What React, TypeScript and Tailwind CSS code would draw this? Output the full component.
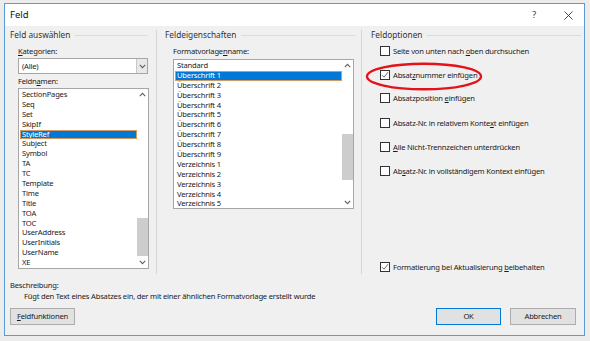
import React from 'react';

const font = { fontFamily: '"Noto Sans", "Open Sans", sans-serif' };

// access-key underline helper: text with one underlined letter at index
const Key: React.FC<{ text: string; at: number }> = ({ text, at }) => (
  <>
    {text.slice(0, at)}
    <span className="underline underline-offset-[1px]">{text.charAt(at)}</span>
    {text.slice(at + 1)}
  </>
);

const Up = () => (
  <svg width="7" height="5" viewBox="0 0 7 5">
    <path d="M0.8 4.2 L3.5 1.3 L6.2 4.2" fill="none" stroke="#606060" strokeWidth="1.1" />
  </svg>
);

const Down = () => (
  <svg width="7" height="5" viewBox="0 0 7 5">
    <path d="M0.8 0.8 L3.5 3.7 L6.2 0.8" fill="none" stroke="#606060" strokeWidth="1.1" />
  </svg>
);

const GroupHeader: React.FC<{ label: string; padLeft: string; lineRight: string }> = ({ label, padLeft, lineRight }) => (
  <div className={`flex items-center h-[10px] ${padLeft} ${lineRight}`}>
    <span className="text-[8.3px] leading-[10px] tracking-normal text-[#333]">{label}</span>
    <div className="flex-1 h-px bg-[#dcdcdc] ml-[5px]" />
  </div>
);

interface ListProps {
  items: string[];
  selected: number;
  thumbTop: number;
  thumbHeight: number;
  className: string;
}

const ListBox: React.FC<ListProps> = ({ items, selected, thumbTop, thumbHeight, className }) => (
  <div className={`relative border border-[#a6a6a6] bg-white flex ${className}`}>
    <div className="flex-1 pt-[1px] pl-[1px] overflow-hidden">
      {items.map((it, i) => (
        <div
          key={it}
          className={`h-[9.9px] leading-[9.9px] text-[7.6px] pl-[2px] ${
            i === selected ? 'bg-[#0078d7] text-white outline outline-1 outline-[#d29a62] -outline-offset-1' : 'text-[#1a1a1a]'
          }`}
        >
          {it}
        </div>
      ))}
    </div>
    <div className="w-[11px] relative bg-white">
      <div className="absolute top-[3px] left-[2px]"><Up /></div>
      <div
        className="absolute left-0 w-[11px] bg-[#cdcdcd]"
        style={{ top: thumbTop, height: thumbHeight }}
      />
      <div className="absolute bottom-[3px] left-[2px]"><Down /></div>
    </div>
  </div>
);

const Check: React.FC<{ checked?: boolean }> = ({ checked }) => (
  <div className="w-[10px] h-[10px] border border-[#333] bg-white flex items-center justify-center shrink-0">
    {checked && (
      <svg width="8" height="8" viewBox="0 0 8 8">
        <path d="M1 4.2 L3 6.2 L7 1.2" fill="none" stroke="#555" strokeWidth="0.9" />
      </svg>
    )}
  </div>
);

const Option: React.FC<{ children: React.ReactNode; checked?: boolean; className?: string }> = ({ children, checked, className }) => (
  <div className={`flex items-center gap-[3px] h-[10px] ${className ?? ''}`}>
    <Check checked={checked} />
    <span className="text-[7.6px] leading-[10px] text-[#1a1a1a] whitespace-nowrap">{children}</span>
  </div>
);

const fieldNames = [
  'SectionPages', 'Seq', 'Set', 'SkipIf', 'StyleRef', 'Subject', 'Symbol', 'TA', 'TC',
  'Template', 'Time', 'Title', 'TOA', 'TOC', 'UserAddress', 'UserInitials', 'UserName', 'XE',
];

const styleNames = [
  'Standard', 'Überschrift 1', 'Überschrift 2', 'Überschrift 3', 'Überschrift 4', 'Überschrift 5',
  'Überschrift 6', 'Überschrift 7', 'Überschrift 8', 'Überschrift 9', 'Verzeichnis 1',
  'Verzeichnis 2', 'Verzeichnis 3', 'Verzeichnis 4', 'Verzeichnis 5',
];

export default function App() {
  return (
    <div className="relative w-[590px] h-[341px] bg-[#ececec] pt-[3px] pl-[4px] overflow-hidden tracking-[-0.2px]" style={font}>
      <div className="w-[581px] h-[333px] border border-[#5b9bd5] bg-[#f0f0f0] flex flex-col">
        {/* title bar */}
        <div className="h-[22px] bg-white flex items-center shrink-0">
          <span className="pl-[5px] text-[9.5px] text-[#111] tracking-normal">Feld</span>
          <span className="ml-auto text-[9px] text-[#333] mr-[28px]">?</span>
          <svg width="9" height="9" viewBox="0 0 9 9" className="mr-[11px]">
            <path d="M0.5 0.5 L8.5 8.5 M8.5 0.5 L0.5 8.5" stroke="#333" strokeWidth="0.9" />
          </svg>
        </div>

        {/* columns */}
        <div className="flex mt-[4px] h-[244px]">
          {/* Feld auswählen */}
          <div className="w-[152px] border-r border-[#d5d5d5] flex flex-col">
            <GroupHeader label="Feld auswählen" padLeft="pl-[5px]" lineRight="pr-[8px]" />
            <div className="pl-[13px] mt-[6px] text-[7.6px] leading-[10px] text-[#1a1a1a]">
              <Key text="Kategorien:" at={0} />
            </div>
            <div className="ml-[13px] mt-[2px] w-[130px] h-[16px] border border-[#a6a6a6] bg-white flex">
              <span className="flex-1 text-[7.6px] leading-[14px] pl-[3px] text-[#1a1a1a]">(Alle)</span>
              <div className="w-[11px] border-l border-[#c8c8c8] bg-[#e8e8e8] flex items-center justify-center">
                <Down />
              </div>
            </div>
            <div className="pl-[13px] mt-[2px] text-[7.6px] leading-[10px] text-[#1a1a1a]">
              <Key text="Feldnamen:" at={5} />
            </div>
            <ListBox
              items={fieldNames}
              selected={4}
              thumbTop={129}
              thumbHeight={38}
              className="ml-[13px] mt-[2px] w-[131px] h-[181px]"
            />
          </div>

          {/* Feldeigenschaften */}
          <div className="w-[205px] border-r border-[#d5d5d5] flex flex-col">
            <GroupHeader label="Feldeigenschaften" padLeft="pl-[8px]" lineRight="pr-[5px]" />
            <div className="pl-[16px] mt-[6px] text-[7.6px] leading-[10px] text-[#1a1a1a]">
              <Key text="Formatvorlagenname:" at={13} />
            </div>
            <ListBox
              items={styleNames}
              selected={1}
              thumbTop={74}
              thumbHeight={46}
              className="ml-[16px] mt-[3px] w-[181px] h-[150px]"
            />
          </div>

          {/* Feldoptionen */}
          <div className="flex-1 flex flex-col">
            <GroupHeader label="Feldoptionen" padLeft="pl-[9px]" lineRight="pr-[3px]" />
            <div className="pl-[18px] flex flex-col">
              <Option className="mt-[6px]"><>Seite von unten nach <Key text="oben" at={0} /> durchsuchen</></Option>
              <Option checked className="mt-[14px]"><Key text="Absatznummer einfügen" at={5} /></Option>
              <Option className="mt-[13px]"><>Absatzposition <Key text="einfügen" at={0} /></></Option>
              <Option className="mt-[15px]"><>Absatz-Nr. in relativem <Key text="Kontext" at={5} /> einfügen</></Option>
              <Option className="mt-[14px]"><Key text="Alle Nicht-Trennzeichen unterdrücken" at={0} /></Option>
              <Option className="mt-[14px]"><Key text="Absatz-Nr. in vollständigem Kontext einfügen" at={2} /></Option>
              <Option checked className="mt-[86px]"><>Formatierung bei Aktualisierung <Key text="beibehalten" at={0} /></></Option>
            </div>
          </div>
        </div>

        {/* description */}
        <div className="pl-[5px] mt-[6px] text-[7.6px] leading-[10px] text-[#1a1a1a]">Beschreibung:</div>
        <div className="pl-[19px] mt-[1px] text-[7.6px] leading-[10px] text-[#1a1a1a]">
          Fügt den Text eines Absatzes ein, der mit einer ähnlichen Formatvorlage erstellt wurde
        </div>

        {/* buttons */}
        <div className="flex items-center mt-[7px] px-[5px]">
          <button className="w-[65px] h-[17px] bg-[#e1e1e1] border border-[#adadad] text-[7.6px] text-[#1a1a1a]">
            <Key text="Feldfunktionen" at={0} />
          </button>
          <button className="ml-auto w-[65px] h-[17px] bg-[#e1e1e1] border border-[#0078d7] text-[7.6px] text-[#1a1a1a]">
            OK
          </button>
          <button className="ml-[9px] mr-[3px] w-[66px] h-[17px] bg-[#e1e1e1] border border-[#adadad] text-[7.6px] text-[#1a1a1a]">
            Abbrechen
          </button>
        </div>
      </div>

      {/* red annotation ellipse */}
      <svg className="absolute left-[365px] top-[62px]" width="118" height="29" viewBox="0 0 118 29">
        <ellipse cx="59" cy="14.5" rx="57" ry="12.8" fill="none" stroke="#e3121b" strokeWidth="2.4" />
      </svg>
    </div>
  );
}
